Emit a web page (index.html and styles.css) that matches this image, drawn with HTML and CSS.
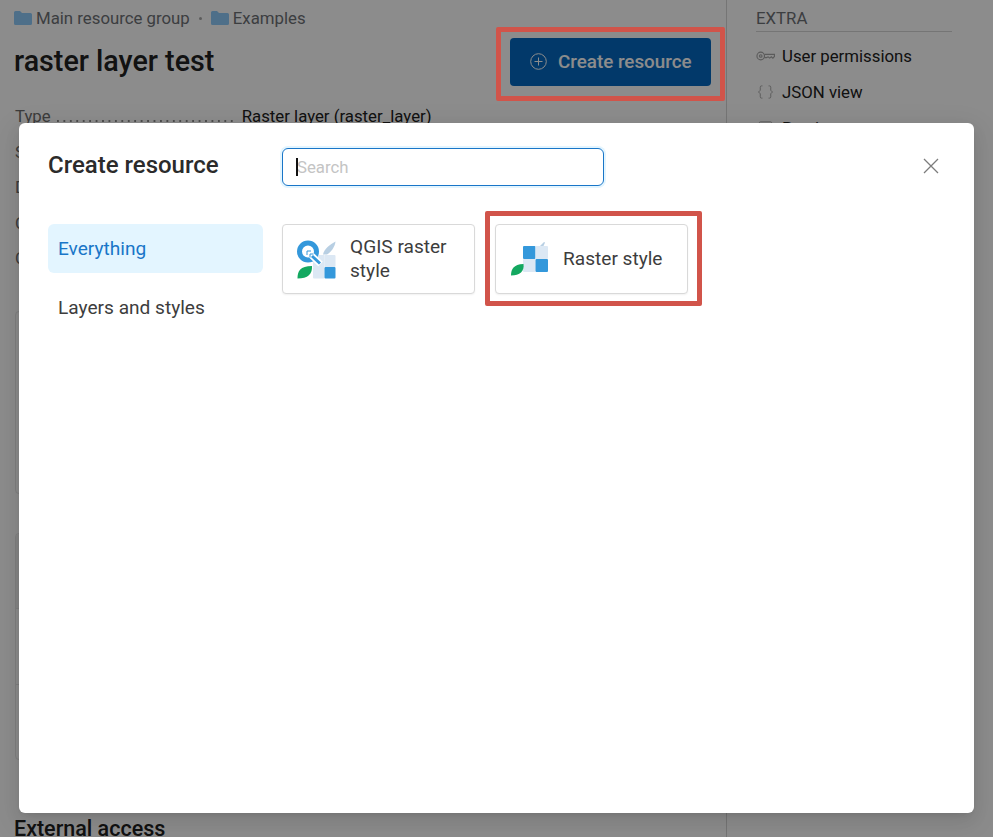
FILE: index.html
```html
<!DOCTYPE html>
<html lang="en">
<head>
<meta charset="utf-8">
<title>raster layer test</title>
<link rel="stylesheet" href="styles.css">
</head>
<body>
<div class="page">
  <main class="main">
    <nav class="crumbs">
      <svg class="folder" viewBox="0 0 18 16"><path d="M0 2.500A1.500 1.500 0 0 1 1.500 1H6l2 2h8.500A1.500 1.500 0 0 1 18 4.500V13.500A1.500 1.500 0 0 1 16.500 15H1.500A1.500 1.500 0 0 1 0 13.500Z"/></svg>
      <span>Main resource group</span>
      <span class="sep"></span>
      <svg class="folder" viewBox="0 0 18 16"><path d="M0 2.500A1.500 1.500 0 0 1 1.500 1H6l2 2h8.500A1.500 1.500 0 0 1 18 4.500V13.500A1.500 1.500 0 0 1 16.500 15H1.500A1.500 1.500 0 0 1 0 13.500Z"/></svg>
      <span>Examples</span>
    </nav>
    <div class="head">
      <h1 class="title">raster layer test</h1>
      <button class="create">
        <svg class="plus" viewBox="0 0 17 17"><circle cx="8.500" cy="8.500" r="7.800"/><path d="M8.500 4.500v8M4.500 8.500h8"/></svg>
        Create resource
      </button>
    </div>
    <div class="rows">
      <div class="row"><span class="key">Type</span><span class="dots"></span><span class="val">Raster layer (raster_layer)</span></div>
      <div class="row"><span class="key">S</span></div>
      <div class="row"><span class="key">D</span></div>
      <div class="row"><span class="key">C</span></div>
      <div class="row"><span class="key">C</span></div>
    </div>
    <div class="box box-plain"></div>
    <div class="box box-table">
      <div class="cell cell-head"></div>
      <div class="cell"></div>
      <div class="cell"></div>
    </div>
    <h2 class="subhead">External access</h2>
  </main>
  <aside class="side">
    <div class="side-title">EXTRA</div>
    <ul class="side-list">
      <li class="side-item">
        <svg class="side-icon" viewBox="0 0 18 12"><circle cx="4.500" cy="6" r="3.600"/><circle cx="4.500" cy="6" r="1.200"/><path d="M8.100 4.500H17.500V6.500L16 8 14.500 6.800 13 8 11.500 6.800 10 7.500H8.100"/></svg>
        User permissions
      </li>
      <li class="side-item">
        <svg class="side-icon" viewBox="0 0 18 16"><path d="M5.500 1H4.500A1.500 1.500 0 0 0 3 2.500V6L1 8 3 10V13.500A1.500 1.500 0 0 0 4.500 15H5.500M12.500 1H13.500A1.500 1.500 0 0 1 15 2.500V6L17 8 15 10V13.500A1.500 1.500 0 0 1 13.500 15H12.500"/></svg>
        JSON view
      </li>
      <li class="side-item">
        <svg class="side-icon" viewBox="0 0 18 16"><rect x="2" y="1" width="14" height="14" rx="1"/></svg>
        Preview
      </li>
    </ul>
  </aside>
</div>

<div class="overlay"></div>

<section class="modal">
  <header class="modal-head">
    <h2 class="modal-title">Create resource</h2>
    <div class="search">
      <input class="search-input" type="text" placeholder="Search">
      <span class="caret"></span>
    </div>
    <svg class="close" viewBox="0 0 16 16"><path d="M1 1 15 15M15 1 1 15"/></svg>
  </header>
  <div class="modal-body">
    <ul class="menu">
      <li class="menu-item active">Everything</li>
      <li class="menu-item">Layers and styles</li>
    </ul>
    <div class="cards">
      <div class="card">
        <svg class="card-icon" viewBox="0 0 40 40">
          <rect x="16" y="16" width="11.500" height="12" fill="#dce8f4"/>
          <rect x="27.500" y="16" width="11" height="12" rx="1" fill="#dce8f4"/>
          <rect x="16" y="28" width="11.500" height="11.500" rx="1" fill="#dce8f4"/>
          <rect x="27.500" y="28" width="11" height="11.500" rx="1" fill="#3498db"/>
          <path d="M26 15.500C27 10 33 5.500 38.500 2.500 38 8 34 13 30 15.500Z" fill="#b8cfe3"/>
          <circle cx="11" cy="12.500" r="8.500" fill="none" stroke="#3498db" stroke-width="5"/>
          <path d="M13 15 23.500 25" stroke="#fff" stroke-width="6.500" fill="none"/>
          <path d="M15 17 23 24.500" stroke="#3498db" stroke-width="3" fill="none"/>
          <path d="M10 12h4M10 12v4M13 15h3.500M13 15v3.500" stroke="#3498db" stroke-width="1" fill="none"/>
          <path d="M0.500 39.500C0.500 32 3 27 15 27 15.500 35 11 39.500 0.500 39.500Z" fill="#13a860"/>
        </svg>
        <span class="card-label">QGIS raster style</span>
      </div>
      <div class="card">
        <svg class="card-icon" viewBox="0 0 40 40">
          <rect x="13" y="7" width="12.500" height="13" rx="1" fill="#3498db"/>
          <rect x="25.500" y="7" width="12.500" height="13" rx="1" fill="#dce8f4"/>
          <rect x="13" y="20" width="12.500" height="13" rx="1" fill="#dce8f4"/>
          <rect x="25.500" y="20" width="12.500" height="13" rx="1" fill="#3498db"/>
          <path d="M30 7 34 3 35 3.500 33.500 7Z" fill="#b8cfe3"/>
          <path d="M1 36.500C1 30 3.500 25.500 13.500 25 14.500 32 10 36.500 1 36.500Z" fill="#13a860"/>
        </svg>
        <span class="card-label">Raster style</span>
      </div>
    </div>
  </div>
</section>

<div class="mark mark-top"></div>
<div class="mark mark-card"></div>
</body>
</html>
```

FILE: styles.css
```css
* { box-sizing: border-box; }
html, body { margin: 0; height: 837px; overflow: hidden; }
body { font-family: Roboto, "Liberation Sans", sans-serif; font-size: 16.8px; color: #212121; background: #fff; }
ul { list-style: none; margin: 0; padding: 0; }
h1, h2 { margin: 0; }

.page { display: flex; height: 837px; }
.main { width: 727px; flex: none; border-right: 1px solid #d6d6d6; padding: 8px 15px 0 14px; display: flex; flex-direction: column; }
.crumbs { display: flex; align-items: center; height: 20px; color: #6e7176; }
.folder { width: 18px; height: 16px; fill: #8fcbfa; margin-right: 4px; }
.sep { width: 3px; height: 3px; border-radius: 50%; background: #a8a8a8; margin: 0 9px 0 9px; }
.head { display: flex; justify-content: space-between; align-items: center; margin-top: 10px; height: 48px; }
.title { font-size: 28.7px; font-weight: 500; line-height: 36px; margin-top: -2px; }
.create { display: flex; align-items: center; gap: 11px; width: 201px; height: 48px; padding: 0 0 1px 20px; border: 0; border-radius: 4px; background: #0569c1; color: #fff; font: 500 18.8px Roboto, sans-serif; white-space: nowrap; }
.plus { width: 17px; height: 17px; fill: none; stroke: #fff; stroke-width: 1; }
.rows { margin-top: 20px; display: flex; flex-direction: column; gap: 15.5px; }
.row { display: flex; height: 20px; line-height: 20px; margin-left: 1px; }
.key { color: #6e6e6e; flex: none; }
.dots { width: 177px; height: 16px; margin: 0 8px 0 6px; background-image: radial-gradient(circle at 1px 1px, #8c8c8c 1px, transparent 1.2px); background-size: 6.45px 2px; background-repeat: repeat-x; background-position: left bottom; }
.val { color: #212121; }
.box { flex: none; margin-left: 1px; border: 1px solid #e6e6e6; border-radius: 4px; }
.box-plain { height: 183px; margin-top: 43px; }
.box-table { height: 227px; margin-top: 39px; display: flex; flex-direction: column; overflow: hidden; }
.cell { flex: 1; border-top: 1px solid #e6e6e6; }
.cell-head { background: #f2f2f2; border-top: 0; }
.subhead { font-size: 21.5px; font-weight: 500; line-height: 26px; margin-top: 56px; }

.side { flex: 1; padding: 8px 41px 0 29px; }
.side-title { height: 24px; line-height: 20px; color: #6e7176; border-bottom: 1px solid #d6d6d6; }
.side-list { display: flex; flex-direction: column; gap: 16px; margin-top: 14px; }
.side-item { display: flex; align-items: center; gap: 7px; height: 20px; }
.side-icon { width: 19px; height: 14px; fill: none; stroke: #a6a6a6; stroke-width: 1.100; }

.overlay { position: absolute; inset: 0; background: rgba(0, 0, 0, .45); }
.modal { position: absolute; left: 19px; top: 123px; width: 955px; height: 690px; background: #fff; border-radius: 6px; padding: 25px 29px; box-shadow: 0 6px 16px rgba(0, 0, 0, .08), 0 3px 6px -4px rgba(0, 0, 0, .12), 0 9px 28px 8px rgba(0, 0, 0, .05); }
.modal-head { display: flex; align-items: center; height: 38px; }
.modal-title { width: 234px; font-size: 24px; font-weight: 500; line-height: 32px; margin-top: -4px; color: #2b2b2b; }
.search { position: relative; width: 322px; height: 38px; }
.search-input { width: 100%; height: 100%; padding: 0 14px; border: 1px solid #1976c8; border-radius: 6px; font: 16.8px Roboto, sans-serif; outline: 0; box-shadow: 0 0 0 2px #e3f5ff; }
.search-input::placeholder { color: #c4c4c4; }
.caret { position: absolute; left: 14px; top: 10px; width: 2px; height: 18px; background: #111; }
.close { width: 16px; height: 16px; margin-left: auto; margin-right: 6px; margin-bottom: 2px; fill: none; stroke: #7c7c7c; stroke-width: 1.300; }

.modal-body { display: flex; margin-top: 38px; }
.menu { width: 215px; flex: none; display: flex; flex-direction: column; gap: 10px; margin-right: 19px; }
.menu-item { height: 49px; line-height: 49px; padding-left: 10px; font-size: 19.1px; color: #3d3d3d; border-radius: 6px; }
.menu-item.active { background: #e3f5ff; color: #1976c8; }
.cards { display: flex; gap: 20px; align-items: flex-start; }
.card { width: 193px; height: 70px; display: flex; align-items: center; gap: 13px; padding: 0 14px; background: #fff; border: 1px solid #d9d9d9; border-radius: 4px; box-shadow: 0 1px 2px rgba(0, 0, 0, .06); }
.card-icon { width: 40px; height: 40px; flex: none; }
.card-label { font-size: 19.1px; line-height: 24px; color: #3d3d3d; }

.mark { position: absolute; border: 5px solid #d1544a; border-radius: 2px; }
.mark-top { left: 496px; top: 27px; width: 229px; height: 74px; }
.mark-card { left: 485px; top: 211px; width: 217px; height: 95px; }
```
